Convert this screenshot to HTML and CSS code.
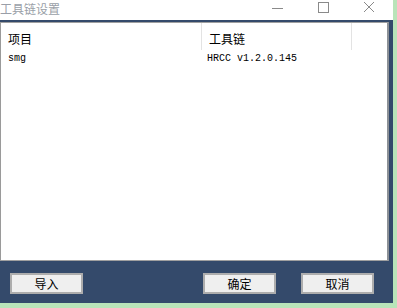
FILE: index.html
```html
<!DOCTYPE html>
<html>
<head>
<meta charset="utf-8">
<link rel="stylesheet" href="styles.css">
</head>
<body>
<div class="screen">
  <div class="window">
    <div class="titlebar">
      <span class="title">工具链设置</span>
      <div class="controls">
        <svg class="ctl ctl-min" width="12" height="12" viewBox="0 0 12 12"><path d="M1 7.5H12" stroke="#8a8a8a" stroke-width="1" fill="none"/></svg>
        <svg class="ctl ctl-max" width="12" height="12" viewBox="0 0 12 12"><rect x="1.5" y="1.5" width="10" height="10" stroke="#8a8a8a" stroke-width="1" fill="none"/></svg>
        <svg class="ctl ctl-close" width="12" height="12" viewBox="0 0 12 12"><path d="M1 1L11 11M11 1L1 11" stroke="#8a8a8a" stroke-width="1" fill="none"/></svg>
      </div>
    </div>
    <div class="frame">
      <div class="listbox">
        <div class="header">
          <div class="hcell col1">项目</div>
          <div class="hcell col2">工具链</div>
          <div class="hcell col3"></div>
        </div>
        <div class="row">
          <div class="cell col1">smg</div>
          <div class="cell col2">HRCC v1.2.0.145</div>
        </div>
      </div>
      <div class="buttons">
        <button class="btn btn-import">导入</button>
        <div class="spacer"></div>
        <button class="btn btn-ok">确定</button>
        <button class="btn btn-cancel">取消</button>
      </div>
    </div>
  </div>
  <div class="edge"></div>
</div>
</body>
</html>
```

FILE: styles.css
```css
html, body {
  margin: 0;
  padding: 0;
  width: 397px;
  height: 308px;
  overflow: hidden;
  background: #b9e4b9;
}
.screen {
  display: flex;
  width: 397px;
  height: 308px;
}
.window {
  width: 393px;
  height: 303px;
  display: flex;
  flex-direction: column;
}
.edge {
  flex: 1;
  background: #b9e4b9;
}
.titlebar {
  height: 20px;
  background: #ffffff;
  display: flex;
  align-items: flex-start;
  position: relative;
}
.title {
  font-family: "Noto Sans CJK SC", sans-serif;
  font-size: 12px;
  line-height: 16px;
  color: #9a9fa8;
  padding-left: 0;
  margin-top: 1px;
}
.controls {
  margin-left: auto;
  display: flex;
}
.ctl {
  display: block;
  margin-top: 1px;
}
.ctl-min { margin-right: 34px; margin-left: 0; }
.ctl-max { margin-right: 34px; }
.ctl-close { margin-right: 18px; }
.controls { padding-right: 0; }
.frame {
  flex: 1;
  background: #344a6b;
  padding: 2px 4px 0 0;
  display: flex;
  flex-direction: column;
}
.listbox {
  height: 237px;
  background: #ffffff;
  border: 1px solid #a0a0a0;
  border-right: 2px solid #8c9096;
  border-left-color: #9a9a9a;
}
.header {
  display: flex;
  height: 27px;
  align-items: stretch;
}
.hcell {
  font-family: "Noto Sans CJK SC", sans-serif;
  font-size: 12px;
  color: #000;
  display: flex;
  align-items: center;
  padding-top: 3px;
  box-sizing: border-box;
}
.col1 { width: 200px; padding-left: 7px; box-sizing: border-box; }
.col2 { width: 150px; padding-left: 7px; box-sizing: border-box; }
.col3 { flex: 1; }
.hcell.col1, .hcell.col2 {
  border-right: 1px solid #e3e3e3;
}
.hcell.col1 { width: 201px; }
.hcell.col2 { width: 150px; }
.row {
  display: flex;
  height: 16px;
  align-items: center;
}
.cell {
  font-family: "Liberation Mono", monospace;
  font-size: 10px;
  color: #000;
}
.cell.col1 { width: 201px; }
.cell.col2 { width: 150px; padding-left: 5px; }
.buttons {
  display: flex;
  padding: 12px 0 0 10px;
  gap: 0;
}
.spacer { flex: 1; }
.btn {
  width: 73px;
  height: 21px;
  background: #efefef;
  border: 2px solid #adadad;
  box-sizing: border-box;
  font-family: "Noto Sans CJK SC", sans-serif;
  font-size: 12px;
  line-height: 15px;
  color: #000;
  padding: 0;
  margin: 0;
}
.btn-ok { margin-right: 25px; }
.btn-cancel { margin-right: 15px; }
```
